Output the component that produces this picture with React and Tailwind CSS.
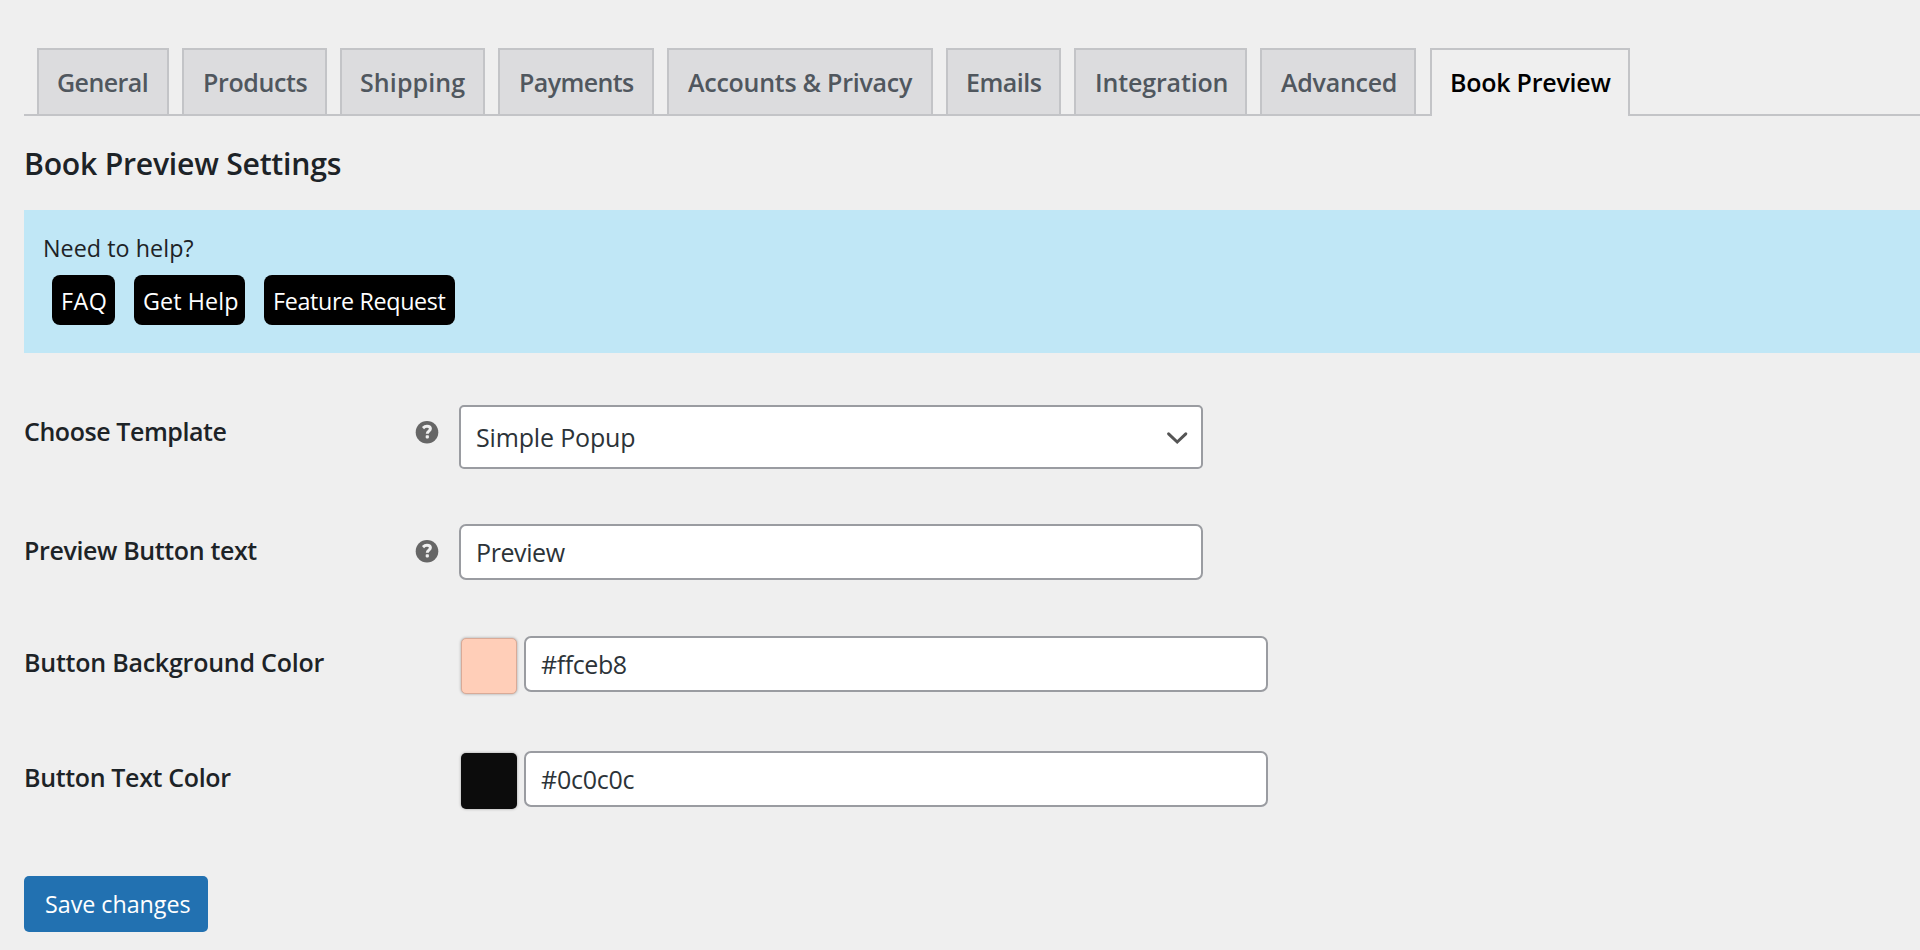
import React from "react";

const tabs = [
  { label: "General", box: "w-[132px] mr-[13px] pl-[18px]", tracking: "tracking-[-0.57px]" },
  { label: "Products", box: "w-[145px] mr-[13px] pl-[19px]", tracking: "tracking-[-0.37px]" },
  { label: "Shipping", box: "w-[145px] mr-[13px] pl-[18px]", tracking: "tracking-[0.1px]" },
  { label: "Payments", box: "w-[156px] mr-[13px] pl-[19px]", tracking: "tracking-[-0.6px]" },
  { label: "Accounts & Privacy", box: "w-[266px] mr-[13px] pl-[19px]", tracking: "tracking-[-0.26px]" },
  { label: "Emails", box: "w-[115px] mr-[13px] pl-[18px]", tracking: "tracking-[-0.48px]" },
  { label: "Integration", box: "w-[173px] mr-[13px] pl-[19px]", tracking: "tracking-[-0.15px]" },
  { label: "Advanced", box: "w-[156px] mr-[14px] pl-[19px]", tracking: "tracking-[-0.26px]" },
  { label: "Book Preview", box: "w-[200px] pl-[18px]", tracking: "tracking-[-0.24px]", active: true },
];

function Tab({ label, box, tracking, active }) {
  const state = active
    ? "h-[68px] bg-[#efefef] text-black pb-px"
    : "h-[66px] bg-[#dcdcde] text-[#50575e] pt-px";
  return (
    <a
      className={`flex shrink-0 items-center whitespace-nowrap border-2 border-b-0 border-[#c3c4c7] text-[25px] font-semibold ${state} ${box} ${tracking}`}
    >
      {label}
    </a>
  );
}

function HelpTip() {
  return (
    <svg className="mt-[3px] h-[24px] w-[24px] shrink-0" viewBox="0 0 24 24" fill="none">
      <circle cx="12" cy="12.2" r="11.3" fill="#666" />
      <path
        d="M8 8.1C9.2 6.9 10.5 6.3 12 6.3c2.1 0 3.4 1 3.4 2.5 0 2.4-3.1 2.3-3.1 4.9"
        stroke="#efefef"
        strokeWidth="3"
      />
      <rect x="10.7" y="15.3" width="3.2" height="3.1" rx="0.8" fill="#efefef" />
    </svg>
  );
}

function Row({ label, tracking, help, className, children }) {
  return (
    <div className={`flex ${className}`}>
      <div className="flex w-[436px] shrink-0 justify-between pt-2 pr-[21px]">
        <label className={`text-[25px] leading-[36px] font-semibold whitespace-nowrap text-[#1d2327] ${tracking}`}>
          {label}
        </label>
        {help && <div className="pt-1"><HelpTip /></div>}
      </div>
      {children}
    </div>
  );
}

const field =
  "flex items-center border-2 border-[#9a9ca1] bg-white pl-[14px] pt-px text-[25px] text-[#2c3338]";

export default function App() {
  return (
    <div className="h-[950px] w-full overflow-hidden bg-[#efefef] pt-[48px] pl-6 font-['Open_Sans',sans-serif]">
      <nav className="flex h-[68px] pl-[13px] bg-[linear-gradient(#c3c4c7,#c3c4c7)] bg-[length:100%_2px] bg-bottom bg-no-repeat">
        {tabs.map((t) => (
          <Tab key={t.label} {...t} />
        ))}
      </nav>

      <h2 className="mt-[30px] text-[30.2px] leading-[36px] font-semibold tracking-[-0.24px] text-[#1d2327]">
        Book Preview Settings
      </h2>

      <section className="mt-[28px] h-[143px] bg-[#c0e7f6] pt-[21px] pl-[19px]">
        <p className="text-[23.3px] leading-[34px] tracking-[0.05px] text-[#1d2327]">Need to help?</p>
        <div className="mt-[10px] flex gap-[19px] pl-[9px] text-[23.3px] whitespace-nowrap text-white">
          <a className="flex h-[50px] w-[63px] items-center rounded-lg bg-black pt-[3px] pl-[9px] tracking-[0.5px]">FAQ</a>
          <a className="flex h-[50px] w-[111px] items-center rounded-lg bg-black pt-[3px] pl-[9px] tracking-[0.1px]">Get Help</a>
          <a className="flex h-[50px] w-[191px] items-center rounded-lg bg-black pt-[3px] pl-[9px] tracking-[-0.35px]">Feature Request</a>
        </div>
      </section>

      <form className="mt-[52px]">
        <Row label="Choose Template" tracking="tracking-[-0.44px]" help className="h-[64px]">
          <div className={`${field} -ml-px h-[64px] w-[744px] justify-between rounded-[5px] pr-[11px] tracking-[-0.16px]`}>
            <span className="pl-px">Simple Popup</span>
            <svg className="h-[26px] w-[26px]" viewBox="0 0 26 26" fill="none">
              <path
                d="M4.6 8.8l8.6 8.2 8.6-8.2"
                stroke="#555"
                strokeWidth="3"
                strokeLinecap="round"
              />
            </svg>
          </div>
        </Row>
        <Row label="Preview Button text" tracking="tracking-[-0.37px]" help className="mt-[55px] h-[56px]">
          <div className={`${field} -ml-px h-[56px] w-[744px] rounded-[7px] tracking-[-0.4px]`}>
            <span className="pl-px">Preview</span>
          </div>
        </Row>
        <Row label="Button Background Color" tracking="tracking-[-0.23px]" className="mt-[56px] h-[56px]">
          <div className="mt-[2px] mr-[7px] ml-px h-[56px] w-[56px] rounded-[5px] border border-[#d9aa97] bg-[#ffceb8] shadow-[0_0_3px_rgba(0,0,0,0.35)]" />
          <div className={`${field} h-[56px] w-[744px] rounded-[7px] tracking-[-0.42px]`}>
            <span className="pl-px">#ffceb8</span>
          </div>
        </Row>
        <Row label="Button Text Color" tracking="tracking-[-0.35px]" className="mt-[59px] h-[56px]">
          <div className="mt-[2px] mr-[7px] ml-px h-[56px] w-[56px] rounded-[5px] bg-[#0c0c0c] shadow-[0_0_3px_rgba(0,0,0,0.35)]" />
          <div className={`${field} h-[56px] w-[744px] rounded-[7px] tracking-[-0.25px]`}>
            <span className="pl-px">#0c0c0c</span>
          </div>
        </Row>
        <button
          type="button"
          className="mt-[69px] flex h-[56px] w-[184px] items-center rounded-[5px] bg-[#2271b1] pt-px pl-[21px] text-[23.3px] tracking-[-0.04px] whitespace-nowrap text-white"
        >
          Save changes
        </button>
      </form>
    </div>
  );
}
